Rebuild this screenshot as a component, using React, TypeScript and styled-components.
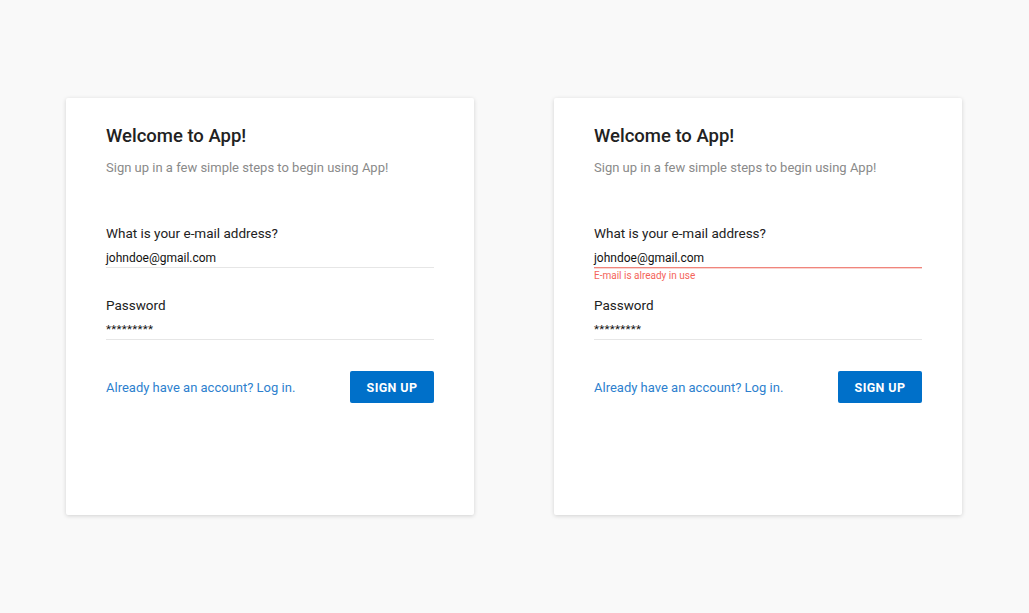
import React from "react";
import styled, { createGlobalStyle } from "styled-components";

const GlobalStyle = createGlobalStyle`
  html, body {
    margin: 0;
    padding: 0;
    background: #f9f9f9;
    font-family: Roboto, "Noto Sans", sans-serif;
    color: #1f1f1f;
  }
`;

const Page = styled.div`
  width: 1029px;
  height: 613px;
  display: flex;
  align-items: flex-start;
  gap: 80px;
  padding: 98px 0 0 66px;
  box-sizing: border-box;
`;

const Card = styled.div`
  width: 408px;
  height: 417px;
  box-sizing: border-box;
  background: #fff;
  border-radius: 2px;
  box-shadow: 0 1px 4px rgba(0, 0, 0, 0.16);
  padding: 25px 40px;
  display: flex;
  flex-direction: column;
`;

const Title = styled.h1`
  margin: 0;
  font-size: 18.5px;
  font-weight: 500;
  line-height: 26px;
  color: #222;
`;

const Subtitle = styled.p`
  margin: 9px 0 0;
  font-size: 13px;
  line-height: 20px;
  color: #8a8a8a;
`;

const Field = styled.div<{ $first?: boolean }>`
  display: flex;
  flex-direction: column;
  margin-top: ${(p) => (p.$first ? "46px" : "28px")};
`;

const Label = styled.label`
  font-size: 13.5px;
  line-height: 18px;
  color: #222;
`;

const Value = styled.div<{ $error?: boolean }>`
  margin-top: 8px;
  padding-bottom: 1px;
  font-size: 12px;
  line-height: 16px;
  color: #111;
  border-bottom: 1px solid ${(p) => (p.$error ? "#f0857c" : "#e6e6e6")};
  box-shadow: ${(p) => (p.$error ? "0 1px 0 rgba(240, 133, 124, 0.35)" : "none")};
`;

const Masked = styled(Value)`
  margin-top: 7px;
  padding-bottom: 2px;
  font-size: 11.5px;
  letter-spacing: 0.3px;
`;

const ErrorText = styled.div`
  margin-top: 2px;
  margin-bottom: -14px;
  font-size: 10px;
  line-height: 12px;
  color: #f4645a;
`;

const Footer = styled.div`
  display: flex;
  justify-content: space-between;
  align-items: center;
  margin-top: 31px;
`;

const Link = styled.a`
  font-size: 13px;
  color: #2d7fce;
  text-decoration: none;
  cursor: pointer;
`;

const Button = styled.button`
  width: 84px;
  height: 32px;
  border: none;
  border-radius: 2px;
  background: #0070c9;
  color: #fff;
  font-family: Roboto, "Noto Sans", sans-serif;
  font-size: 12.5px;
  font-weight: 700;
  letter-spacing: 0.4px;
  cursor: pointer;
`;

const SignupCard: React.FC<{ error?: string }> = ({ error }) => (
  <Card>
    <Title>Welcome to App!</Title>
    <Subtitle>Sign up in a few simple steps to begin using App!</Subtitle>
    <Field $first>
      <Label>What is your e-mail address?</Label>
      <Value $error={!!error}>johndoe@gmail.com</Value>
      {error && <ErrorText>{error}</ErrorText>}
    </Field>
    <Field>
      <Label>Password</Label>
      <Masked>*********</Masked>
    </Field>
    <Footer>
      <Link>Already have an account? Log in.</Link>
      <Button>SIGN UP</Button>
    </Footer>
  </Card>
);

export default function App() {
  return (
    <>
      <GlobalStyle />
      <Page>
        <SignupCard />
        <SignupCard error="E-mail is already in use" />
      </Page>
    </>
  );
}
